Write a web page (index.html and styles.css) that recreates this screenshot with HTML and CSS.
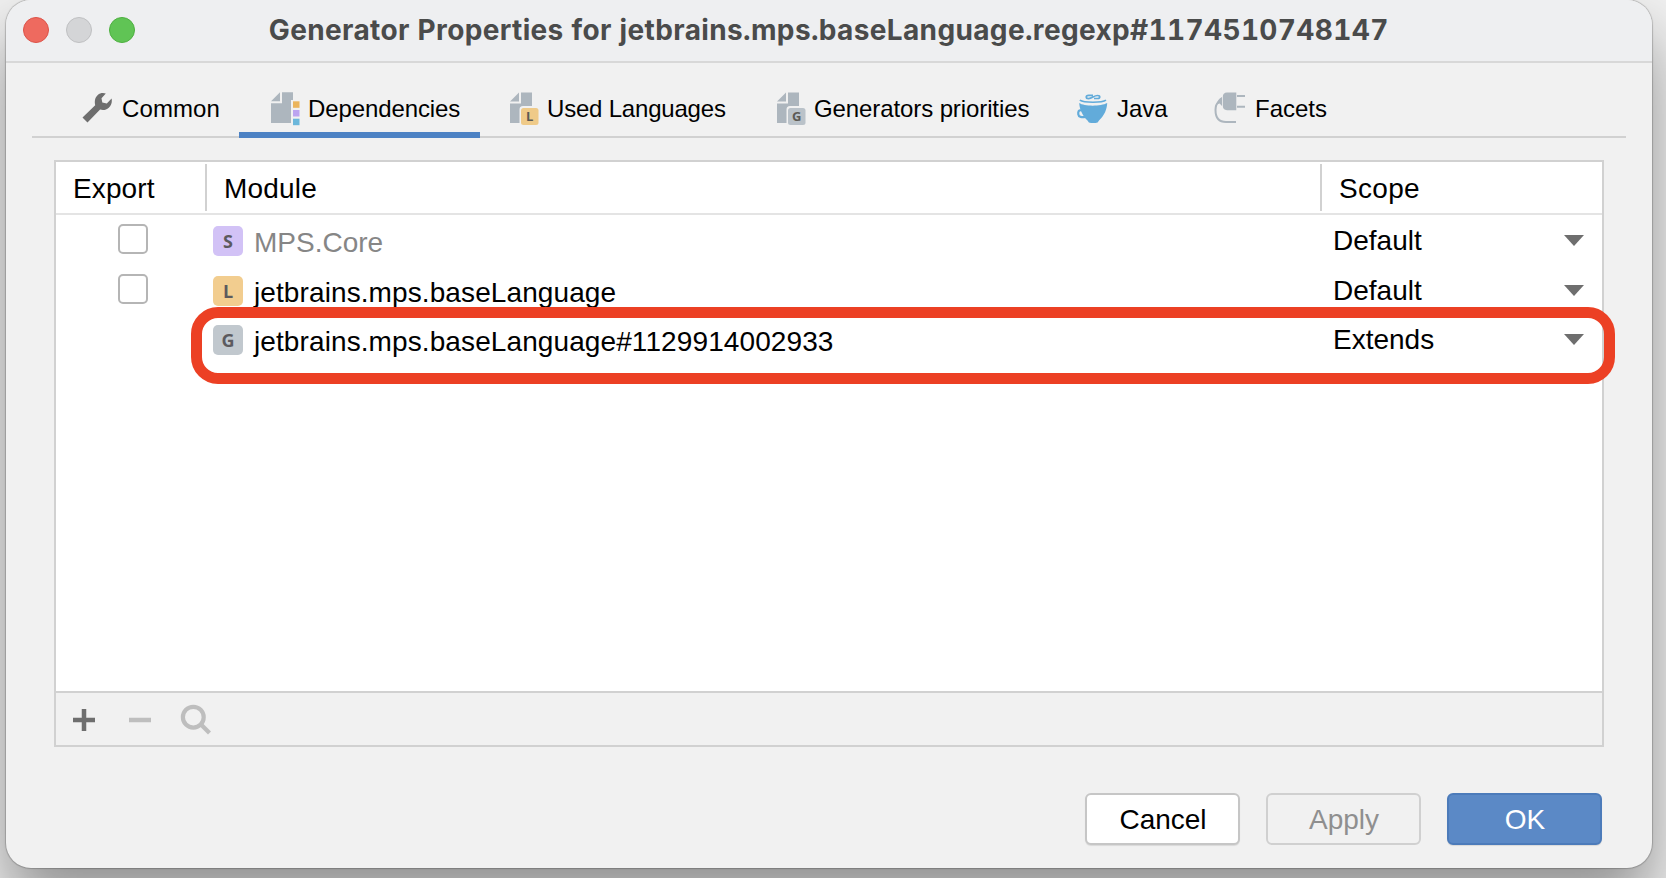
FILE: index.html
```html
<!DOCTYPE html>
<html lang="en">
<head>
<meta charset="utf-8">
<title>Generator Properties</title>
<link rel="stylesheet" href="styles.css">
</head>
<body>
<main class="window">
  <header class="titlebar">
    <div class="lights"><span class="light close"></span><span class="light min"></span><span class="light max"></span></div>
    <h1 class="title">Generator Properties for jetbrains.mps.baseLanguage.regexp#1174510748147</h1>
  </header>
  <nav class="tabs">
    <div class="tab common">
      <svg class="icon" viewBox="0 0 32 36"><path fill="#6e6e6e" d="M2.500 27.500 15.200 15.200C14.200 11 15 7.500 17.800 5C20 3.100 23 2.600 25.800 3.600L21.500 8.200L22.300 12.600L26.800 13.500L31.600 8.600C32.300 12 31.400 15.300 28.800 17.700C26.300 20 23.200 20.400 20.100 19.600L7.500 32.400Z"/></svg>
      <span class="label">Common</span>
    </div>
    <div class="tab deps active">
      <svg class="icon" viewBox="0 0 32 36"><path fill="#adb6be" d="M1 11.200 10 2.200V11.200ZM12 2.200H23V10H21V33H1V13.200H12Z"/><path fill="#ebb55d" d="M23 11.300h6.500v6.500H23z"/><path fill="#bca4f0" d="M23 20h6.500v6.500H23z"/><path fill="#6bb7db" d="M23 28.700h6.500v6.500H23z"/></svg>
      <span class="label">Dependencies</span>
    </div>
    <div class="tab used">
      <svg class="icon" viewBox="0 0 32 36"><path fill="#adb6be" d="M1 11.500 10 2.500V11.500ZM12 2.500H23V16H14Q10.500 16 10.500 19.500V33H1V13.500H12Z"/><rect x="12" y="18" width="17.500" height="17" rx="2.500" fill="#efca88"/><text class="mini" x="20.700" y="31">L</text></svg>
      <span class="label">Used Languages</span>
    </div>
    <div class="tab gens">
      <svg class="icon" viewBox="0 0 32 36"><path fill="#adb6be" d="M1 11.500 10 2.500V11.500ZM12 2.500H23V16H14Q10.500 16 10.500 19.500V33H1V13.500H12Z"/><rect x="12" y="18" width="17.500" height="17" rx="2.500" fill="#bac2c9"/><text class="mini" x="20.700" y="31">G</text></svg>
      <span class="label">Generators priorities</span>
    </div>
    <div class="tab java">
      <svg class="icon" viewBox="0 0 32 36"><g fill="none" stroke="#62abda"><path stroke-width="1.700" d="M17 5.300H12.500C9.500 5.300 9.500 8.600 12.500 8.600C16 8.600 18 5.500 21.500 5.500C24.500 5.500 24.500 8.500 21.500 8.500H18"/><path stroke-width="1.600" d="M3.800 10.200C8 13 26 13 30 10.200"/><path stroke-width="2.200" d="M6 20.500C2.400 19.500 2 22 2.300 24.300C2.600 27 6 27.600 9 27"/></g><path fill="#62abda" d="M3.200 13C8 16.500 25 16.500 31.200 13C31 19 28.500 25.500 23 30.500Q22 33 19.500 33H15Q12.500 33 11.500 30.500C6.500 26 3.500 19 3.200 13Z"/></svg>
      <span class="label">Java</span>
    </div>
    <div class="tab facets">
      <svg class="icon" viewBox="0 0 32 36"><path fill="#adb6be" d="M14 2.500H23.300V20.200H14Q9.800 20 9.800 15.500V7Q9.800 2.500 14 2.500ZM3.500 14.500Q4.500 9 9 7V16L6.700 13.500Z"/><path fill="none" stroke="#adb6be" stroke-width="2" d="M24 6H32M24 16.700H32M6 11.500C2.700 14 2.500 17 2.500 20C2.500 28 6.500 32 13 32H23"/></svg>
      <span class="label">Facets</span>
    </div>
  </nav>
  <section class="panel">
    <div class="head row">
      <div class="c1">Export</div><div class="c2">Module</div><div class="c3">Scope</div>
    </div>
    <div class="body">
      <div class="item row">
        <div class="c1"><span class="check"></span></div>
        <div class="c2"><span class="badge s">S</span><span class="name core">MPS.Core</span></div>
        <div class="c3"><span>Default</span><svg class="arrow" viewBox="0 0 20 11"><path d="M0 0H20L10 11Z"/></svg></div>
      </div>
      <div class="item row">
        <div class="c1"><span class="check"></span></div>
        <div class="c2"><span class="badge l">L</span><span class="name lang">jetbrains.mps.baseLanguage</span></div>
        <div class="c3"><span>Default</span><svg class="arrow" viewBox="0 0 20 11"><path d="M0 0H20L10 11Z"/></svg></div>
      </div>
      <div class="item row">
        <div class="c1"></div>
        <div class="c2"><span class="badge g">G</span><span class="name gen">jetbrains.mps.baseLanguage#1129914002933</span></div>
        <div class="c3"><span>Extends</span><svg class="arrow" viewBox="0 0 20 11"><path d="M0 0H20L10 11Z"/></svg></div>
      </div>
      <div class="highlight"></div>
    </div>
    <div class="toolbar">
      <svg class="tool" viewBox="0 0 32 32"><path fill="none" stroke="#6e6e6e" stroke-width="4.500" d="M5 16H27M16 5V27"/></svg>
      <svg class="tool" viewBox="0 0 32 32"><path fill="none" stroke="#bebebe" stroke-width="4.500" d="M5 16H27"/></svg>
      <svg class="tool" viewBox="0 0 32 32"><g fill="none" stroke="#bebebe" stroke-width="4.200"><circle cx="13.300" cy="13.200" r="10.400"/><path d="M21 20.500 29.500 29"/></g></svg>
    </div>
  </section>
  <footer class="actions">
    <button class="btn cancel">Cancel</button>
    <button class="btn apply">Apply</button>
    <button class="btn ok">OK</button>
  </footer>
</main>
</body>
</html>
```
FILE: styles.css
```css
* { box-sizing: border-box; }
body { margin: 0; height: 878px; overflow: hidden; background: #f0f0f0; font-family: "Liberation Sans", Arial, sans-serif; color: #000; }
.window { width: 1646px; height: 868px; margin-left: 6px; background: #f1f1f1; border-radius: 25px; box-shadow: 0 0 1px 1px rgba(0,0,0,.2), 0 36px 64px rgba(0,0,0,.4); }
.titlebar { height: 63px; display: flex; align-items: flex-start; background: #eeeff1; border-bottom: 2px solid #d8d8d8; border-radius: 25px 25px 0 0; }
.lights { display: flex; gap: 17px; padding: 17px 0 0 17.300px; }
.light { width: 26px; height: 26px; border-radius: 50%; border: 1px solid; }
.close { background: #ee6a5f; border-color: #dd5248; }
.min { background: #d4d5d7; border-color: #bfc0c2; }
.max { background: #60c455; border-color: #4cb03f; }
.title { margin: 0 0 0 133.500px; padding-top: 13px; font: 700 28px/34px Inter, sans-serif; font-variant-numeric: tabular-nums; color: #4a4b4b; white-space: nowrap; letter-spacing: .36px; }
.tabs { display: flex; height: 75px; margin: 0 26px; border-bottom: 2px solid #d1d1d1; }
.tab { display: flex; align-items: flex-start; gap: 6px; height: 75px; padding: 27px 0 0 29px; font-size: 24px; line-height: 36px; white-space: nowrap; }
.label { line-height: 37px; }
.icon { width: 32px; height: 36px; flex: none; }
.mini { font: 700 13px "Open Sans", sans-serif; fill: #5c5a55; text-anchor: middle; }
.common { width: 207px; padding-left: 48px; gap: 10px; letter-spacing: .1px; }
.deps { width: 241px; padding-left: 31px; letter-spacing: -.1px; }
.used { width: 267px; letter-spacing: -.2px; }
.gens { width: 300px; letter-spacing: -.1px; }
.java { width: 137px; gap: 9px; }
.facets { width: 170px; gap: 10px; }
.active { border-bottom: 6px solid #4d82c4; }
.panel { width: 1550px; height: 587px; margin: 22px 0 0 48px; border: 2px solid #d1d1d1; font-size: 28px; display: flex; flex-direction: column; }
.row { display: grid; grid-template-columns: 151px 1115px 1fr; background: #fff; }
.head { height: 53px; padding: 2px 0; border-bottom: 2px solid #e4e4e4; line-height: 50px; }
.head .c1, .head .c2 { border-right: 2px solid #d1d1d1; height: 47px; }
.head .c1 { padding-left: 17px; letter-spacing: .1px; }
.head .c2 { padding-left: 17px; letter-spacing: .2px; }
.head .c3 { padding-left: 17px; letter-spacing: .3px; }
.body { position: relative; flex: 1; background: #fff; padding-top: 2px; }
.item { height: 49.700px; }
.item .c1 { padding: 7px 0 0 62px; }
.item .c2 { display: flex; padding: 9px 0 0 6px; }
.item .c3 { display: flex; justify-content: space-between; padding: 0 18px 0 11px; line-height: 48px; }
.check { display: block; width: 30px; height: 30px; border: 2px solid #b5b5b5; border-radius: 5px; }
.badge { width: 30px; height: 30px; border-radius: 5px; font: 700 18px/30px "Open Sans", sans-serif; text-align: center; color: #5c5a5e; }
.badge.s { background: #d2c2f6; }
.badge.l { background: #f2cd8f; }
.badge.g { background: #c1c8ce; }
.name { margin-left: 11px; line-height: 34px; white-space: nowrap; }
.core { color: #868686; }
.lang, .gen { letter-spacing: .1px; }
.arrow { width: 20px; height: 11px; margin-top: 18px; fill: #6e6e6e; }
.highlight { position: absolute; left: 135px; top: 92px; width: 1424px; height: 77px; border: 11px solid #ec4024; border-radius: 27px; }
.toolbar { height: 54px; border-top: 2px solid #d1d1d1; padding: 11px 0 0 12px; display: flex; gap: 24px; }
.tool { width: 32px; height: 32px; }
.actions { display: flex; justify-content: flex-end; gap: 26px; margin-top: 46px; padding-right: 50px; }
.btn { width: 155px; height: 52px; padding: 2px 0 0 1px; border: 2px solid #c6c6c6; border-radius: 6px; font: 28px "Liberation Sans", Arial, sans-serif; box-shadow: 0 1px 1px rgba(0,0,0,.1); }
.cancel { background: #fff; color: #000; }
.apply { background: #f1f1f1; color: #8f8f8f; border-color: #d0d0d0; box-shadow: none; }
.ok { background: #5b89c6; color: #fff; border-color: #4c7bba; }
```
